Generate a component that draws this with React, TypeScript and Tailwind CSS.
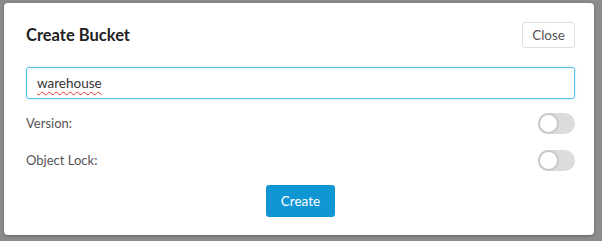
import React from "react";

function Toggle() {
  return (
    <div className="relative h-[21px] w-[37px] rounded-full bg-[#dcdcdc]">
      <div className="absolute left-0 top-0 h-[21px] w-[21px] rounded-full border-2 border-[#c9c9c9] bg-white" />
    </div>
  );
}

export default function App() {
  return (
    <div className="h-[241px] w-[602px] bg-[#8c8c8c] pl-[4px] pt-[3px] font-['Lato',sans-serif]">
      <div className="flex h-[232px] w-[590px] flex-col rounded-[4px] bg-white pl-[22px] pr-[19px] shadow-[0_1px_3px_rgba(0,0,0,0.3)]">
        <div className="flex items-center justify-between pt-[19px]">
          <div className="text-[16.5px] font-bold text-[#222]">Create Bucket</div>
          <button className="h-[26px] rounded-[3px] border border-[#e0e0e0] px-[9px] text-[13.5px] text-[#555]">
            Close
          </button>
        </div>
        <div className="mt-[19px] flex h-[32px] items-center rounded-[3px] border border-[#56c1ec] px-[10px] shadow-[0_0_2px_rgba(86,193,236,0.6)]">
          <span className="text-[13.5px] text-[#333] underline decoration-wavy decoration-[#e53935] decoration-1 underline-offset-[3px]">
            warehouse
          </span>
        </div>
        <div className="mt-[14px] flex items-center justify-between">
          <span className="text-[13px] text-[#555]">Version:</span>
          <Toggle />
        </div>
        <div className="mt-[16px] flex items-center justify-between">
          <span className="text-[13px] text-[#555]">Object Lock:</span>
          <Toggle />
        </div>
        <div className="mt-[14px] flex justify-center">
          <button className="h-[32px] rounded-[3px] bg-[#0f96d3] px-[15px] text-[13.5px] text-white">
            Create
          </button>
        </div>
      </div>
    </div>
  );
}
